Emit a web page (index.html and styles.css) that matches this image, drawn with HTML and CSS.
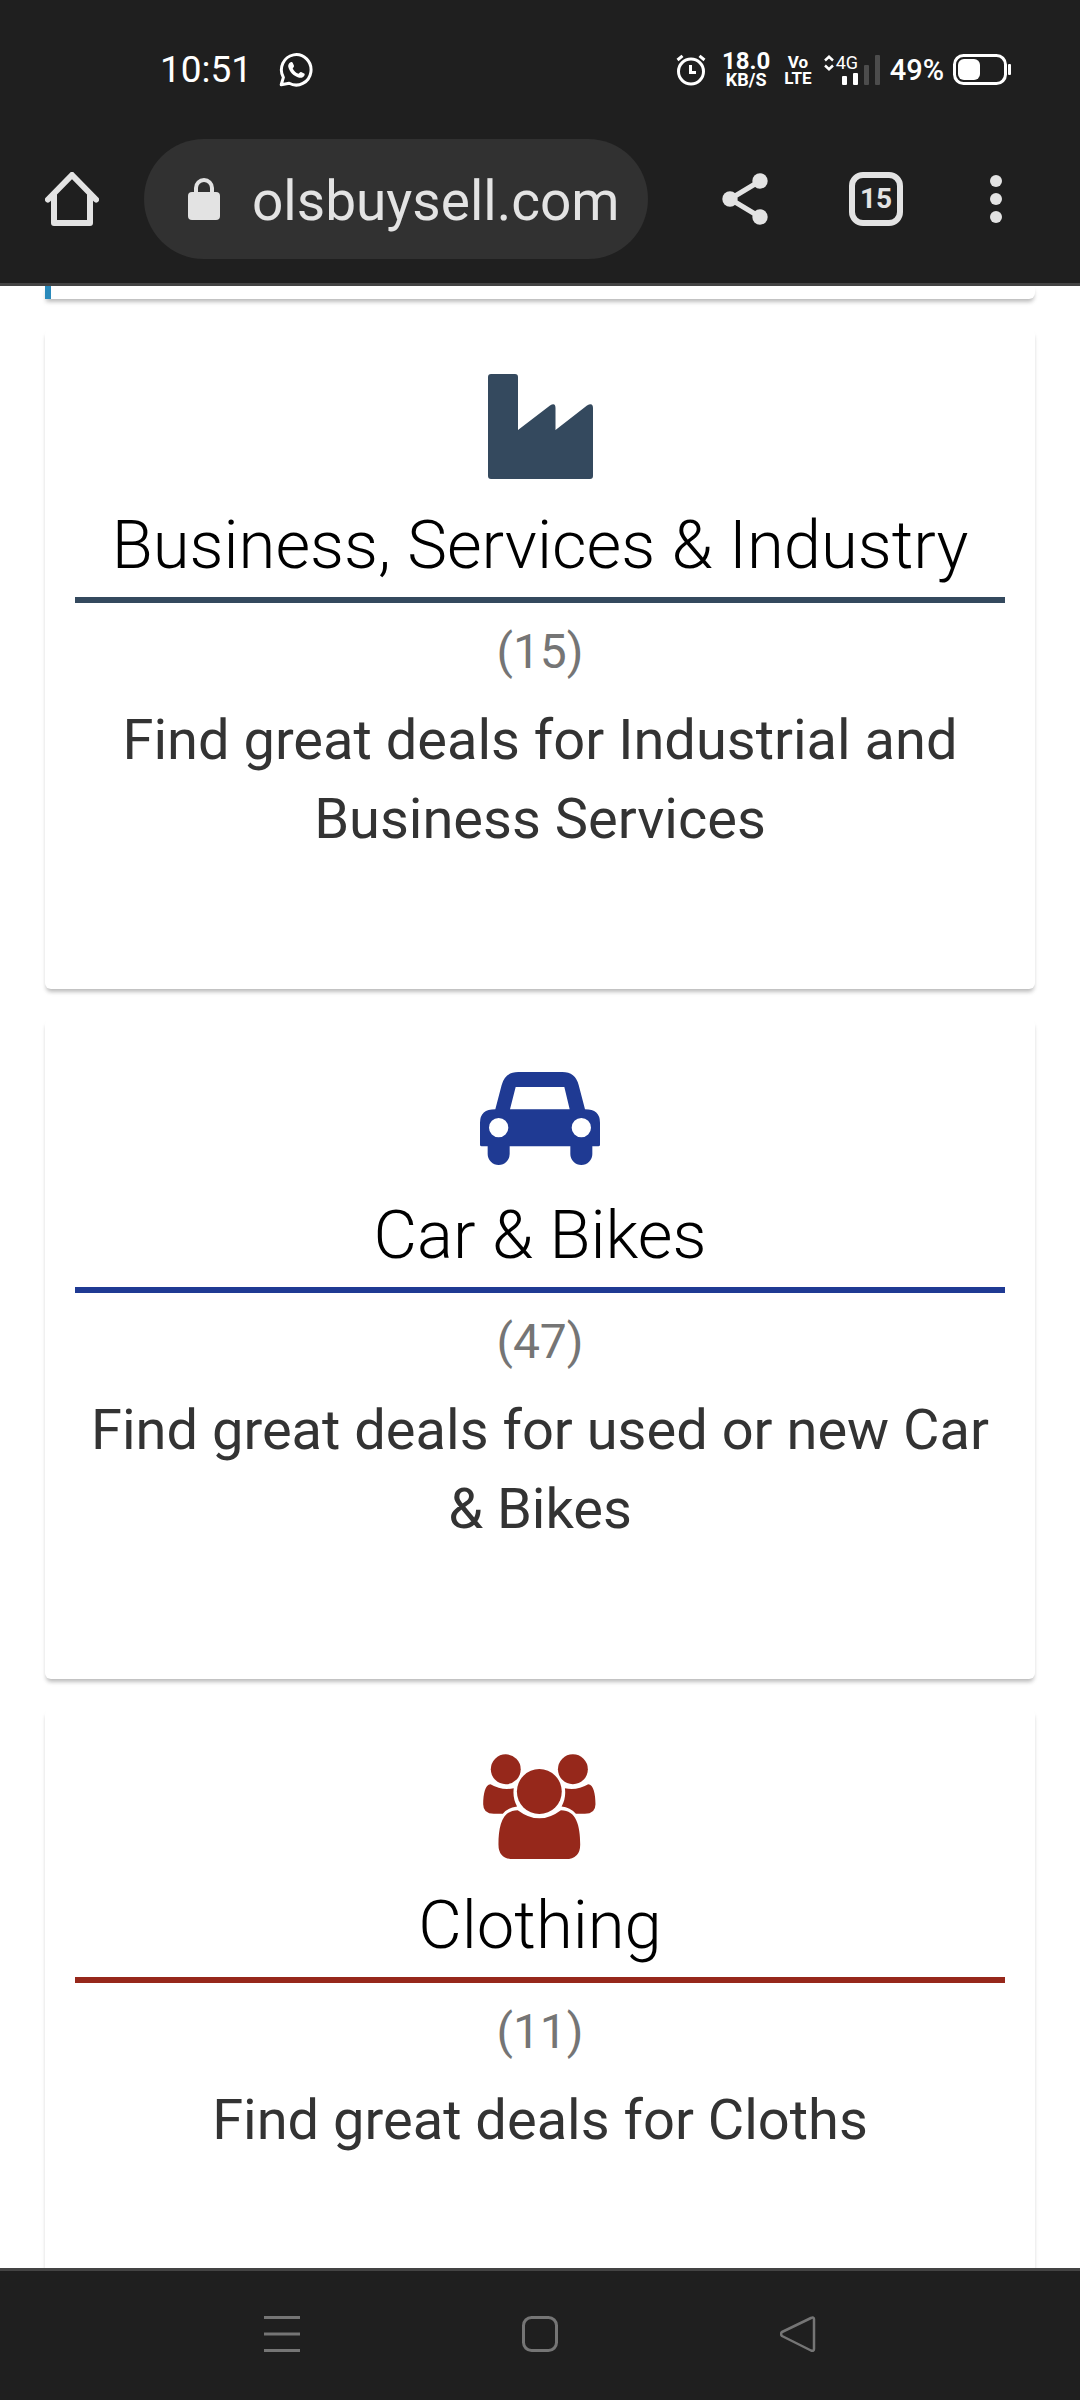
FILE: index.html
```html
<!DOCTYPE html>
<html lang="en">
<head>
<meta charset="utf-8">
<meta name="viewport" content="width=device-width, initial-scale=1">
<title>olsbuysell.com</title>
<link rel="stylesheet" href="styles.css">
</head>
<body>
<header class="top">
  <div class="status">
    <div class="status-left">
      <span class="time">10:51</span>
      <svg class="whatsapp" width="34" height="34" viewBox="0 0 34 34" aria-hidden="true">
        <path d="M2.2 31.8 4.4 24.4A14.8 15.2 0 1 1 10.2 30.2Z" fill="none" stroke="#fff" stroke-width="3" stroke-linejoin="round"/>
        <path d="M11.6 9.2c1-.6 1.7-.3 2.2.8l1.2 2.8c.3.9-.9 1.9-1.3 2.6 1.300 2.600 3.100 4.300 5.800 5.400.8-.6 1.600-2.200 2.600-1.800l3 1.400c.8.4.7 1.200.3 2.100-1 2-3.200 2.700-5.200 2.200C14.600 23.300 10.600 19.200 9.300 14.100c-.5-2 .6-4 2.300-4.900Z" fill="#fff"/>
      </svg>
    </div>
    <div class="status-right">
      <svg class="alarm" width="30" height="32" viewBox="0 0 30 32" aria-hidden="true" fill="none" stroke="#fff">
        <circle cx="15" cy="17.500" r="12.500" stroke-width="3"/>
        <path d="M14.500 11v7.500H20" stroke-width="3"/>
        <path d="M1.500 6 6.500 1.800M28.500 6 23.500 1.800" stroke-width="3"/>
      </svg>
      <div class="speed"><span class="speed-value">18.0</span><span class="speed-unit">KB/S</span></div>
      <div class="volte"><span>Vo</span><span>LTE</span></div>
      <div class="signal">
        <div class="signal-net">
          <svg width="10" height="16" viewBox="0 0 10 16" aria-hidden="true" fill="none" stroke="#fff" stroke-width="2.500"><path d="M1 5.500 5 1.800 9 5.500M1 10.500 5 14.200 9 10.500"/></svg>
          <span>4G</span>
        </div>
        <svg class="bars" width="38" height="30" viewBox="0 0 38 30" aria-hidden="true">
          <rect x="0" y="21" width="5" height="9" rx="1" fill="#fff"/><rect x="11" y="18" width="5" height="12" rx="1" fill="#fff"/>
          <rect x="22" y="10" width="5" height="20" rx="1" fill="#4c4c4c"/><rect x="33" y="0" width="5" height="30" rx="1" fill="#4c4c4c"/>
        </svg>
      </div>
      <span class="percent">49%</span>
      <svg class="battery" width="58" height="31" viewBox="0 0 58 31" aria-hidden="true">
        <rect x="1.500" y="1.500" width="51" height="28" rx="9" fill="none" stroke="#fff" stroke-width="3"/>
        <rect x="5" y="5" width="22" height="21" rx="6" fill="#fff"/><rect x="55" y="10" width="3" height="11" rx="1" fill="#fff"/>
      </svg>
    </div>
  </div>
  <div class="toolbar">
    <button class="tool home" aria-label="Home">
      <svg width="54" height="54" viewBox="0 0 54 54" fill="none" stroke="#e3e3e3" stroke-width="6" stroke-linecap="round" stroke-linejoin="round"><path d="M3 27.500 27 3 51 27.500"/><path d="M9 23V51H45V23" /></svg>
    </button>
    <div class="address">
      <svg width="32" height="42" viewBox="0 0 32 42" aria-hidden="true"><rect y="14" width="32" height="28" rx="4" fill="#e3e3e3"/><path d="M8 15V10a8 8 0 0 1 16 0v5" fill="none" stroke="#e3e3e3" stroke-width="4"/></svg>
      <input class="url" type="text" value="olsbuysell.com" aria-label="Address">
    </div>
    <div class="tools">
      <button class="tool" aria-label="Share">
        <svg width="46" height="52" viewBox="0 0 46 52" fill="#e3e3e3"><path d="M38 8 8 26 38 44" fill="none" stroke="#e3e3e3" stroke-width="5"/><circle cx="38" cy="8" r="7.700"/><circle cx="8" cy="26" r="7.700"/><circle cx="38" cy="44" r="7.700"/></svg>
      </button>
      <button class="tool tabs" aria-label="Open tabs">15</button>
      <button class="tool" aria-label="More">
        <svg width="12" height="50" viewBox="0 0 12 50" fill="#e3e3e3"><circle cx="6" cy="7" r="6"/><circle cx="6" cy="25" r="6"/><circle cx="6" cy="43" r="6"/></svg>
      </button>
    </div>
  </div>
</header>

<main class="page">
  <div class="card card-end"></div>
  <article class="card business">
    <div class="icon"><svg width="105" height="105" viewBox="0 0 105 105"><path d="M3 0H27Q30 0 30 3V56L62 31.500Q67.500 28 67.500 34V56L99 31.500Q105 28 105 34V102Q105 105 102 105H3Q0 105 0 102V3Q0 0 3 0Z"/></svg></div>
    <h2 class="title">Business, Services &amp; Industry</h2>
    <p class="count">(15)</p>
    <p class="text">Find great deals for Industrial and Business Services</p>
  </article>
  <article class="card cars">
    <div class="icon"><svg width="120" height="96" viewBox="120 87 360 288"><path fill-rule="evenodd" d="M166 208 185 135Q195 96 235 96H367Q406 96 416 135L435 208Q480 208 480 248V314Q480 319 475 319H457V342A33 33 0 0 1 391 342V319H209V342A33 33 0 0 1 143 342V319H125Q120 319 120 314V248Q120 208 166 208ZM227 141 210 208H389L373 141ZM176 234A29 29 0 1 0 176 292A29 29 0 1 0 176 234ZM424 234A29 29 0 1 0 424 292A29 29 0 1 0 424 234Z"/></svg></div>
    <h2 class="title">Car &amp; Bikes</h2>
    <p class="count">(47)</p>
    <p class="text">Find great deals for used or new Car &amp; Bikes</p>
  </article>
  <article class="card clothing">
    <div class="icon"><svg width="114" height="105" viewBox="130 71 342 316"><circle cx="198" cy="117" r="45"/><circle cx="400" cy="117" r="45"/><circle cx="299" cy="184" r="67.500"/><path d="M152 162C136 162 130 192 130 222Q130 251 162 251H189Q206 231 232 229Q218 204 222 174Q186 182 152 162ZM446 162C462 162 468 192 468 222Q468 251 436 251H409Q392 231 366 229Q380 204 376 174Q412 182 446 162ZM234 240C188 240 176 286 176 343Q176 387 220 387H378Q422 387 422 343C422 286 410 240 364 240Q299 289 234 240Z"/></svg></div>
    <h2 class="title">Clothing</h2>
    <p class="count">(11)</p>
    <p class="text">Find great deals for Cloths</p>
  </article>
</main>

<nav class="system" aria-label="System navigation">
  <button class="tool" aria-label="Recent apps"><svg width="36" height="36" viewBox="0 0 36 36" stroke="#757575" stroke-width="3"><path d="M0 1.500H36M0 18H36M0 34.500H36"/></svg></button>
  <button class="tool" aria-label="Home screen"><svg width="36" height="36" viewBox="0 0 36 36" fill="none" stroke="#757575" stroke-width="3"><rect x="1.500" y="1.500" width="33" height="33" rx="8"/></svg></button>
  <button class="tool" aria-label="Back"><svg width="36" height="36" viewBox="0 0 36 36" fill="none" stroke="#757575" stroke-width="2.500" stroke-linejoin="round"><path d="M2 16Q0 18 2 20L31 34.500Q34 35.500 34 33V3Q34 .8 31 2Z"/></svg></button>
</nav>
</body>
</html>
```
FILE: styles.css
```css
* { box-sizing: border-box; }

body {
  margin: 0;
  height: 100vh;
  display: flex;
  flex-direction: column;
  background: #fff;
  font-family: Roboto, "Liberation Sans", sans-serif;
}

h2, p { margin: 0; }
svg { display: block; flex: none; }

/* Browser and status bars */
.top {
  flex: none;
  background: #1f1f1f;
  border-bottom: 3px solid #444;
  padding-bottom: 24px;
  color: #fff;
}

.status {
  height: 139px;
  padding: 0 69px 0 160px;
  display: flex;
  align-items: center;
  justify-content: space-between;
}

.status-left, .status-right { display: flex; align-items: center; }
.status-left { gap: 27px; }
.time { font-size: 37px; line-height: 40px; }

.speed, .volte { display: flex; flex-direction: column; align-items: center; font-weight: 700; }
.speed { margin-left: 16px; }
.speed-value { font-size: 24px; line-height: 20px; }
.speed-unit { font-size: 18px; line-height: 18px; }
.volte {
  margin-left: 14px;
  font-size: 17px;
  line-height: 16px;
}

.signal { margin-left: 12px; display: grid; }
.signal-net, .bars { grid-area: 1 / 1; }
.signal-net { display: flex; align-items: center; align-self: start; gap: 2px; font-size: 18px; line-height: 16px; }
.bars { margin-left: 18px; }

.percent { margin-left: 10px; font-size: 29px; font-weight: 500; line-height: 32px; }
.battery { margin-left: 9px; }

.toolbar {
  display: flex;
  align-items: center;
  padding: 0 78px 0 45px;
  gap: 45px;
}

.tool {
  flex: none;
  padding: 0;
  border: 0;
  background: none;
  color: #e3e3e3;
  font: inherit;
}

.address {
  flex: 1;
  min-width: 0;
  height: 120px;
  padding: 0 30px 0 44px;
  display: flex;
  align-items: center;
  gap: 32px;
  border-radius: 60px;
  background: #313131;
}

.url {
  flex: 1;
  min-width: 0;
  padding: 4px 0 0;
  border: 0;
  background: none;
  color: #e3e3e3;
  font: 55px/64px Roboto, "Liberation Sans", sans-serif;
}

.tools {
  flex: none;
  display: flex;
  align-items: center;
  gap: 81px;
  margin-left: 29px;
}

.tabs {
  width: 54px;
  height: 54px;
  margin-right: 6px;
  border: 6px solid #e3e3e3;
  border-radius: 14px;
  font-size: 28px;
  font-weight: 700;
  line-height: 42px;
}

/* Category list */
.page {
  flex: 1;
  min-height: 0;
  overflow: hidden;
  padding: 0 45px;
  display: flex;
  flex-direction: column;
  gap: 30px;
}

.card {
  flex: none;
  min-height: 660px;
  padding: 45px 30px;
  border-radius: 6px;
  background: #fff;
  box-shadow: 0 4px 4px -2px rgba(0, 0, 0, .24), 0 4px 4px rgba(0, 0, 0, .08);
  text-align: center;
}

.card-end {
  min-height: 0;
  padding: 13px 0 0;
  border-left: 6px solid #2a8abb;
  border-radius: 0 0 6px 0;
}

.icon {
  height: 105px;
  display: flex;
  align-items: center;
  justify-content: center;
}

.title {
  margin-top: 26px;
  padding-bottom: 12px;
  border-bottom: 6px solid;
  font-size: 67px;
  font-weight: 300;
  line-height: 80px;
}

.count {
  margin-top: 21px;
  color: #757575;
  font-size: 48px;
  line-height: 56px;
}

.text {
  margin-top: 21px;
  color: #333;
  font-size: 56px;
  line-height: 79px;
}

.business .icon { fill: #34495e; }
.business .title { border-color: #34495e; }
.cars .icon { fill: #1f3a93; }
.cars .title { border-color: #1f3a93; }
.clothing .icon { fill: #96281b; }
.clothing .title { border-color: #96281b; }

/* System navigation */
.system {
  flex: none;
  height: 132px;
  padding: 0 153px 4px;
  border-top: 3px solid #444;
  background: #1f1f1f;
  display: grid;
  grid-template-columns: repeat(3, 1fr);
  align-items: center;
  justify-items: center;
}
```
